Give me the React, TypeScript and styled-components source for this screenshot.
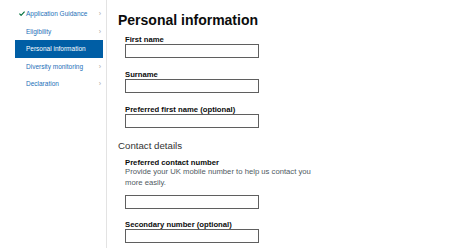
import React from "react";
import styled, { createGlobalStyle } from "styled-components";

const GlobalStyle = createGlobalStyle`
  html, body {
    margin: 0;
    padding: 0;
    background: #ffffff;
  }
  body {
    font-family: "Liberation Sans", Arial, sans-serif;
    color: #0b0c0c;
  }
`;

const Page = styled.div`
  display: flex;
  align-items: flex-start;
  width: 474px;
  height: 251px;
  overflow: hidden;
`;

const Sidebar = styled.nav`
  box-sizing: border-box;
  width: 107px;
  height: 248px;
  padding: 5px 3px 0 15px;
  border-right: 1px solid #e3e3e3;
  flex-shrink: 0;
`;

const NavList = styled.ul`
  list-style: none;
  margin: 0;
  padding: 0;
`;

const NavItem = styled.li<{ $active?: boolean }>`
  position: relative;
  display: flex;
  align-items: center;
  justify-content: space-between;
  height: 17.5px;
  padding: 0 2px 0 11px;
  font-size: 6.5px;
  color: ${(p) => (p.$active ? "#ffffff" : "#1d70b8")};
  background: ${(p) => (p.$active ? "#005ea5" : "transparent")};
`;

const Tick = styled.svg`
  position: absolute;
  left: 4px;
  top: 6px;
  width: 6px;
  height: 5px;
`;

const Chevron = styled.span<{ $hidden?: boolean }>`
  font-size: 7px;
  color: #a8a8a8;
  visibility: ${(p) => (p.$hidden ? "hidden" : "visible")};
`;

const Main = styled.main`
  padding: 11px 0 0 11px;
`;

const Heading = styled.h1`
  margin: 0;
  font-size: 14px;
  line-height: 18px;
  font-weight: 700;
  color: #0b0c0c;
`;

const Form = styled.div`
  padding-left: 7px;
  margin-top: 6.4px;
`;

const Field = styled.div<{ $gap?: number }>`
  margin-bottom: ${(p) => p.$gap ?? 12}px;
`;

const Label = styled.label`
  display: block;
  font-size: 7.7px;
  line-height: 9px;
  font-weight: 700;
  color: #0b0c0c;
`;

const Hint = styled.div`
  max-width: 200px;
  margin-bottom: 6.3px;
  font-size: 7.7px;
  line-height: 10.5px;
  color: #505a5f;
`;

const Input = styled.input`
  display: block;
  box-sizing: border-box;
  width: 134px;
  height: 14px;
  margin: 0;
  padding: 0 3px;
  border: 1px solid #5f5f5f;
  border-radius: 0;
  background: #ffffff;
  font: inherit;
`;

const SubHeading = styled.h2`
  margin: 0 0 6px -7px;
  font-size: 9.7px;
  line-height: 12px;
  font-weight: 400;
  color: #333333;
`;

const steps = [
  { label: "Application Guidance", done: true },
  { label: "Eligibility" },
  { label: "Personal information", active: true },
  { label: "Diversity monitoring" },
  { label: "Declaration" },
];

export default function App() {
  return (
    <>
      <GlobalStyle />
      <Page>
        <Sidebar>
          <NavList>
            {steps.map((s) => (
              <NavItem key={s.label} $active={s.active}>
                {s.done && (
                  <Tick viewBox="0 0 6 5">
                    <path d="M0.4 2.6 L2.1 4.3 L5.6 0.6" fill="none" stroke="#00703c" strokeWidth="1.2" />
                  </Tick>
                )}
                <span>{s.label}</span>
                <Chevron $hidden={s.active}>›</Chevron>
              </NavItem>
            ))}
          </NavList>
        </Sidebar>
        <Main>
          <Heading>Personal information</Heading>
          <Form>
            <Field>
              <Label>First name</Label>
              <Input />
            </Field>
            <Field>
              <Label>Surname</Label>
              <Input />
            </Field>
            <Field>
              <Label>Preferred first name (optional)</Label>
              <Input />
            </Field>
            <SubHeading>Contact details</SubHeading>
            <Field $gap={11}>
              <Label>Preferred contact number</Label>
              <Hint>Provide your UK mobile number to help us contact you more easily.</Hint>
              <Input />
            </Field>
            <Field>
              <Label>Secondary number (optional)</Label>
              <Input />
            </Field>
          </Form>
        </Main>
      </Page>
    </>
  );
}
